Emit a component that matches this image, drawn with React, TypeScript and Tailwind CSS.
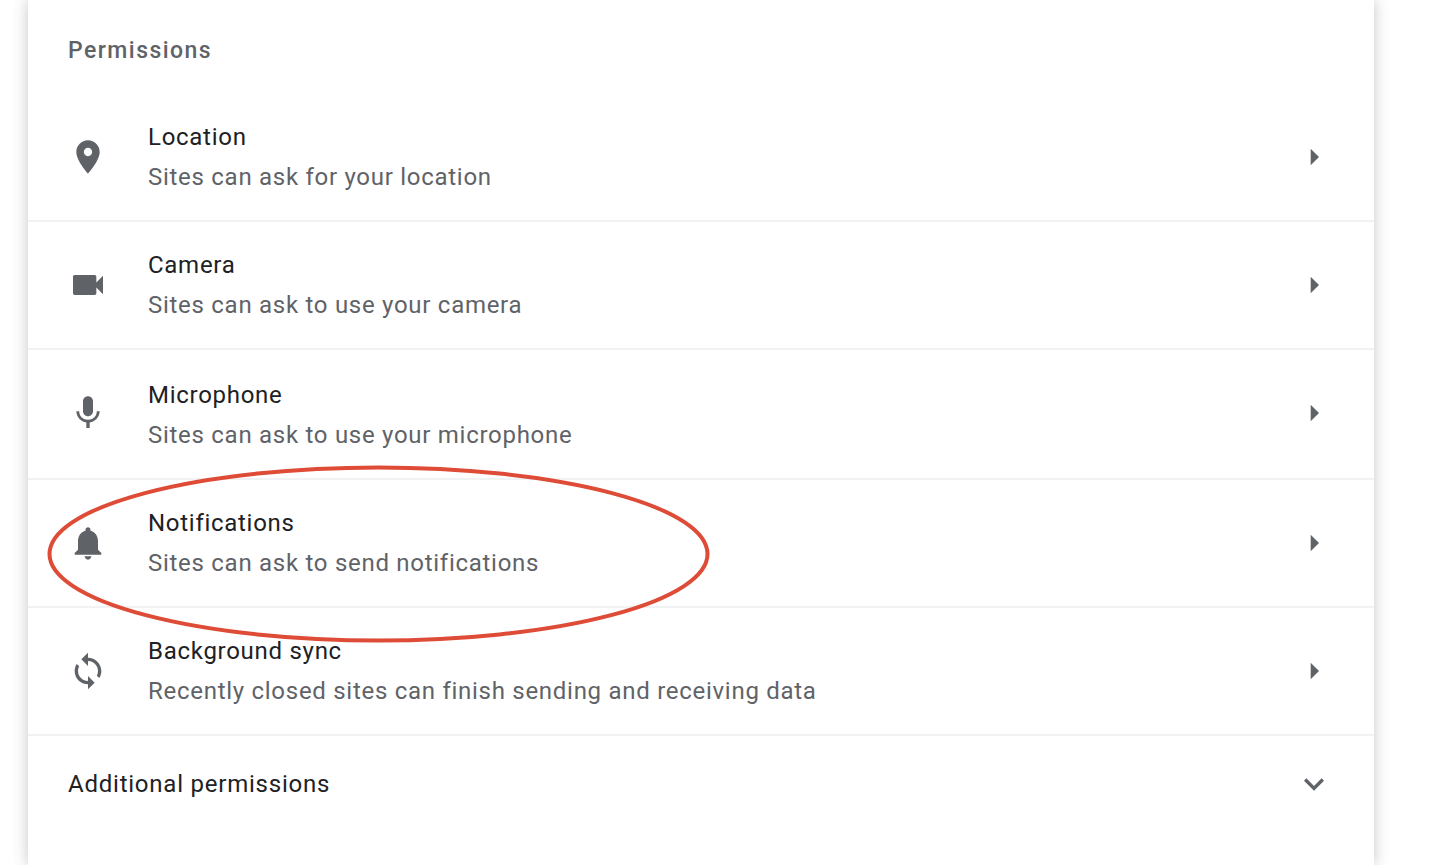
import React from "react";

const P = {
  pin: "M12 2C8.13 2 5 5.13 5 9c0 5.25 7 13 7 13s7-7.75 7-13c0-3.87-3.13-7-7-7zm0 9.5c-1.38 0-2.5-1.12-2.5-2.5s1.12-2.5 2.5-2.5 2.5 1.12 2.5 2.5-1.12 2.5-2.5 2.5z",
  cam: "M17 10.5V7c0-.55-.45-1-1-1H4c-.55 0-1 .45-1 1v10c0 .55.45 1 1 1h12c.55 0 1-.45 1-1v-3.5l4 4v-11l-4 4z",
  mic: "M12 14c1.66 0 3-1.34 3-3V5c0-1.66-1.34-3-3-3S9 3.34 9 5v6c0 1.66 1.34 3 3 3zm5.3-3c0 3-2.54 5.1-5.3 5.1S6.7 14 6.7 11H5c0 3.41 2.72 6.23 6 6.72V21h2v-3.28c3.28-.48 6-3.3 6-6.72h-1.7z",
  bell: "M12 22c1.1 0 2-.9 2-2h-4c0 1.1.89 2 2 2zm6-6v-5c0-3.07-1.64-5.64-4.5-6.32V4c0-.83-.67-1.5-1.5-1.5s-1.5.67-1.5 1.5v.68C7.63 5.36 6 7.92 6 11v5l-2 2v1h16v-1l-2-2z",
  sync: "M12 4V1L8 5l4 4V6c3.31 0 6 2.69 6 6 0 1.01-.25 1.97-.7 2.8l1.46 1.46C19.54 15.03 20 13.57 20 12c0-4.42-3.58-8-8-8zm0 14c-3.31 0-6-2.69-6-6 0-1.01.25-1.97.7-2.8L5.24 7.74C4.46 8.97 4 10.43 4 12c0 4.42 3.58 8 8 8v3l4-4-4-4v3z",
  arrow: "M10 17l5-5-5-5v10z",
  chevron: "M7.41 8.59L12 13.17l4.59-4.58L18 10l-6 6-6-6 1.41-1.41z",
};

function Icon({ d }: { d: string }) {
  return (
    <svg viewBox="0 0 24 24" className="w-10 h-10 shrink-0 fill-[#5f6368]">
      <path d={d} />
    </svg>
  );
}

const rows = [
  { icon: P.pin, t: "Location", s: "Sites can ask for your location", box: "h-[128px] pb-px", text: "" },
  { icon: P.cam, t: "Camera", s: "Sites can ask to use your camera", box: "h-[128px]", text: "" },
  { icon: P.mic, t: "Microphone", s: "Sites can ask to use your microphone", box: "h-[130px] pb-[2px]", text: "pt-[4px]" },
  { icon: P.bell, t: "Notifications", s: "Sites can ask to send notifications", box: "h-[128px]", text: "" },
  { icon: P.sync, t: "Background sync", s: "Recently closed sites can finish sending and receiving data", box: "h-[128px]", text: "" },
];

export default function App() {
  return (
    <div className="relative h-[865px] overflow-hidden bg-white font-['Roboto',sans-serif]">
      <div className="ml-[28px] w-[1346px] h-[865px] bg-white shadow-[0_0_14px_rgba(60,64,67,0.3)] flex flex-col">
        <div className="h-[94px] pl-[40px] pt-[37px] text-[23px] leading-[28px] tracking-[1.45px] font-medium text-[#5f6368]">
          Permissions
        </div>
        {rows.map((r) => (
          <div key={r.t} className={`${r.box} flex items-center border-b-2 border-[#f1f2f3] pl-[40px] pr-[40px]`}>
            <Icon d={r.icon} />
            <div className={`${r.text} ml-[40px] flex-1 text-[24px] leading-[40px] tracking-[0.72px]`}>
              <div className="text-[#202124]">{r.t}</div>
              <div className="text-[#5f6368]">{r.s}</div>
            </div>
            <Icon d={P.arrow} />
          </div>
        ))}
        <div className="h-[96px] flex items-center justify-between pl-[40px] pr-[40px] text-[24px] tracking-[0.77px] text-[#202124]">
          <span>Additional permissions</span>
          <Icon d={P.chevron} />
        </div>
      </div>
      <svg viewBox="0 0 1434 865" className="absolute inset-0 w-[1434px] h-[865px] pointer-events-none">
        <ellipse cx="378.5" cy="554" rx="329" ry="86.5" fill="none" stroke="#de4b37" strokeWidth="4" />
      </svg>
    </div>
  );
}
